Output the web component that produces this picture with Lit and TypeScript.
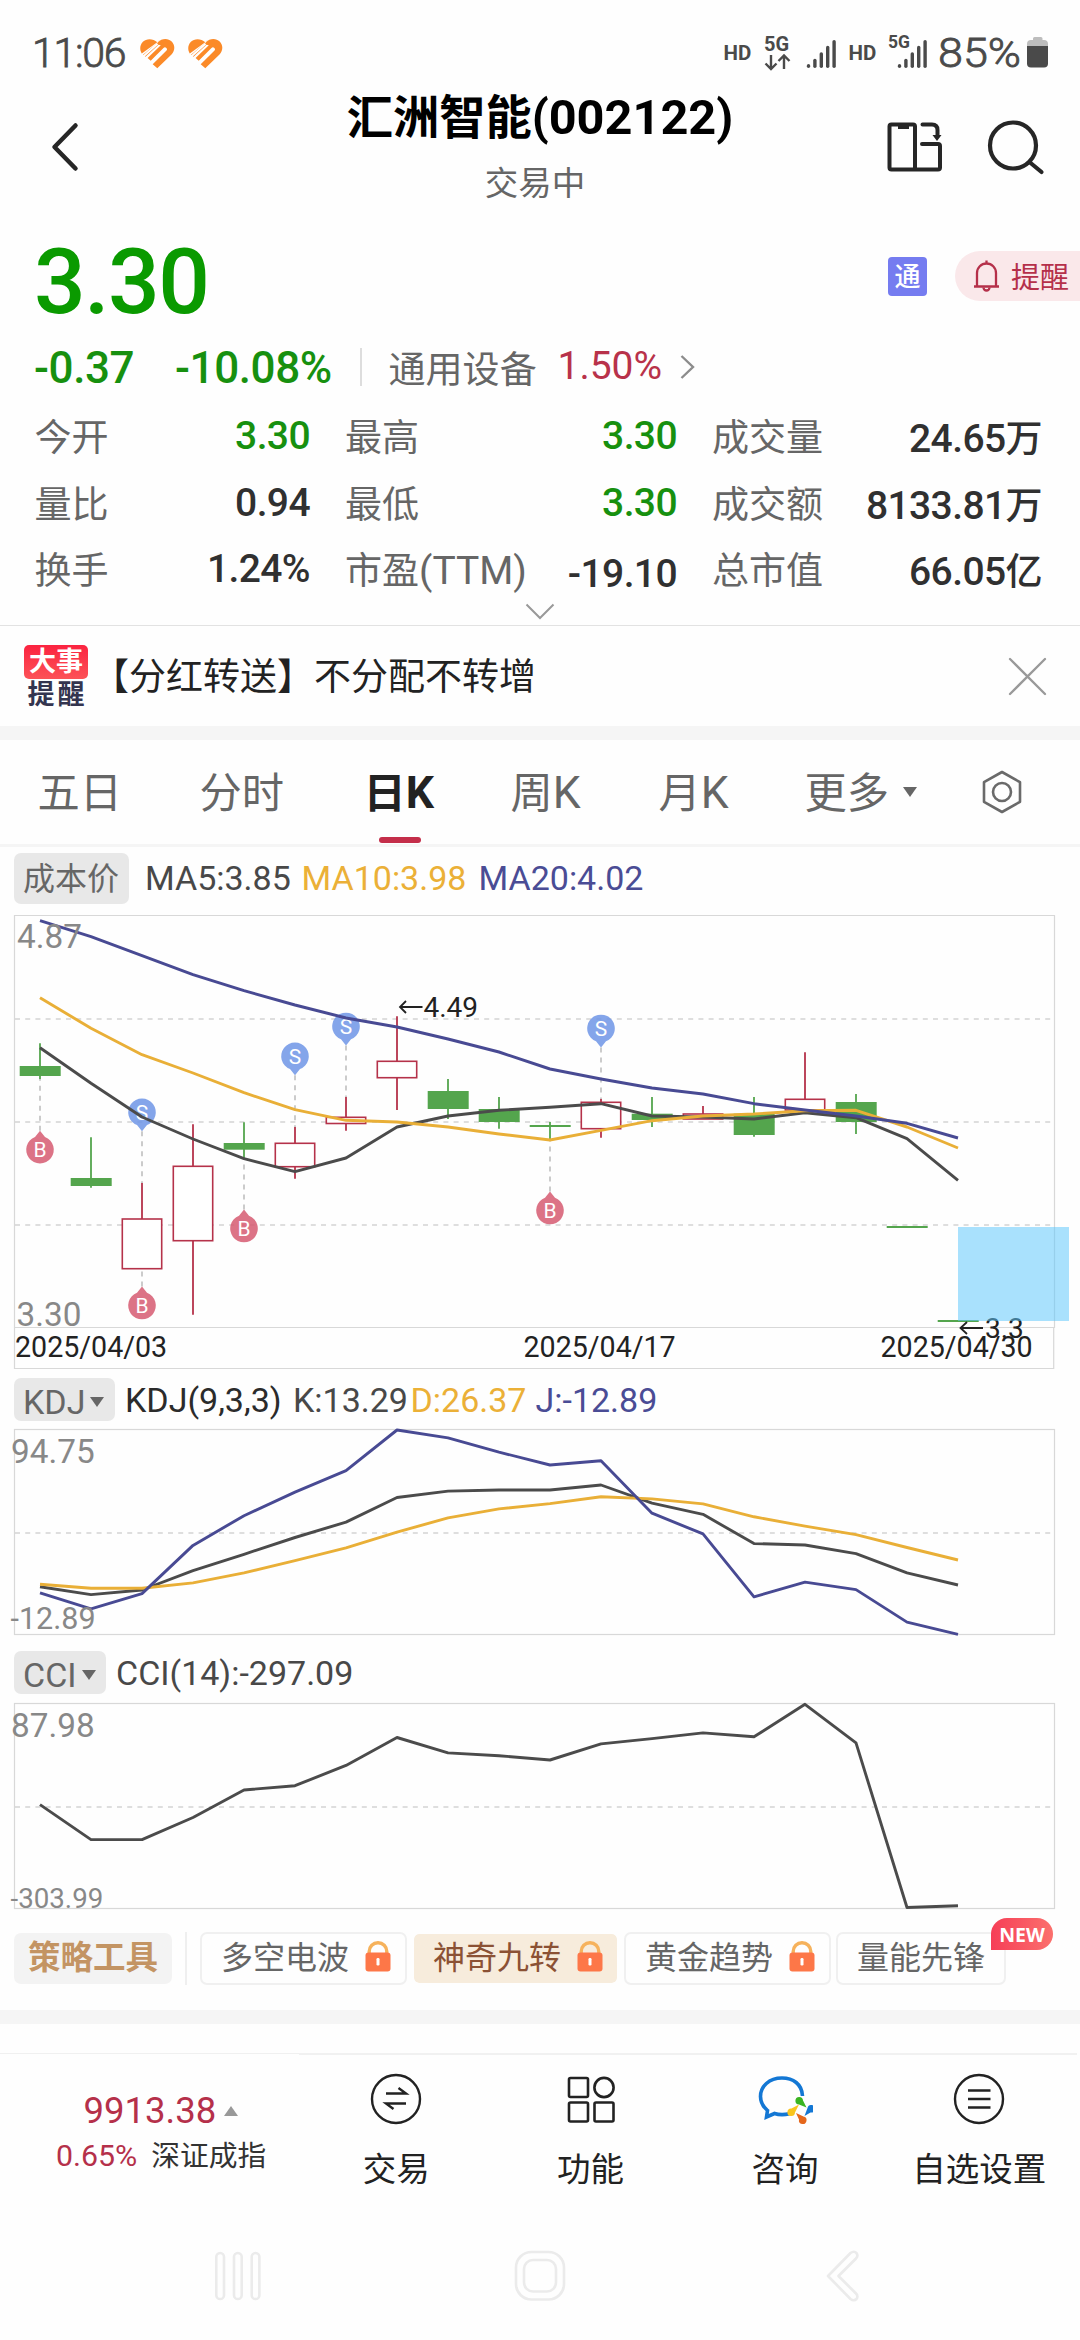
import { LitElement, html, svg, css } from "lit";
import { customElement } from "lit/decorators.js";
import { classMap } from "lit/directives/class-map.js";

const FIRST_X = 40;
const STEP = 51;
const xAt = (i: number) => FIRST_X + STEP * i;
const pathOf = (ys: number[]) => ys.map((y, i) => `${xAt(i)},${y.toFixed(1)}`).join(" ");
const scaled = (base: number, unit: number, vs: number[]) => vs.map((v) => base + v / unit);

interface Candle { up: boolean; high: number; low: number; top: number; bottom: number; }
const c = (up: boolean, high: number, low: number, top: number, bottom: number): Candle => ({ up, high, low, top, bottom });

const CANDLES: Candle[] = [
  c(false, 1043.3, 1079, 1066, 1076),
  c(false, 1137.3, 1187.7, 1178, 1186),
  c(true, 1183, 1219, 1219, 1268.7),
  c(true, 1124.3, 1314.7, 1166.3, 1240.7),
  c(false, 1122.3, 1158, 1143, 1149.7),
  c(true, 1127, 1178.7, 1143.3, 1166.7),
  c(true, 1097, 1130.7, 1117.3, 1123.5),
  c(true, 1016.3, 1110, 1061.3, 1077.7),
  c(false, 1079, 1119, 1091, 1109),
  c(false, 1097, 1128.7, 1109, 1122),
  c(false, 1122, 1140, 1125, 1127),
  c(true, 1099, 1137.7, 1102.3, 1128.7),
  c(false, 1097, 1127, 1113.7, 1120),
  c(true, 1106, 1119, 1114, 1119),
  c(false, 1097, 1136.7, 1113.7, 1135),
  c(true, 1052.3, 1099.3, 1099.3, 1110),
  c(false, 1094, 1134, 1102, 1122),
  c(false, 1226, 1228, 1226, 1228),
  c(false, 1320, 1322, 1320, 1322),
];

const MA5 = scaled(900, 3, [443, 550, 651, 717, 776, 815, 774, 681, 648, 631, 622, 611, 648, 651, 657, 638, 653, 716, 841]);
const MA10 = scaled(900, 3, [293, 385, 464, 519, 578, 629, 661, 666, 681, 702, 720, 691, 662, 648, 642, 632, 631, 681, 744]);
const MA20 = scaled(900, 3, [62, 110, 167, 224, 272, 315, 354, 381, 417, 456, 507, 537, 564, 582, 611, 630, 648, 670, 714]);
const K = scaled(1370, 2.8, [607, 629, 616, 562, 516, 469, 426, 357, 339, 336, 336, 322, 373, 404, 486, 490, 514, 568, 602]);
const D = scaled(1370, 2.8, [600, 611, 611, 596, 568, 534, 498, 454, 414, 389, 374, 355, 361, 375, 411, 437, 461, 497, 532]);
const J = scaled(1370, 2.8, [624, 669, 626, 491, 408, 342, 282, 168, 190, 230, 266, 254, 401, 459, 635, 594, 615, 706, 740]);
const CCI = scaled(1370, 2.8, [1217, 1315, 1315, 1253, 1176, 1164, 1107, 1029, 1072, 1080, 1092, 1047, 1032, 1016, 1027, 936, 1044, 1505, 1500]);

interface Marker { i: number; kind: "B" | "S"; cy: number; to: number; }
const MARKERS: Marker[] = [
  { i: 0, kind: "B", cy: 1149.7, to: 1079 },
  { i: 2, kind: "S", cy: 1112.3, to: 1183 },
  { i: 2, kind: "B", cy: 1305.5, to: 1270 },
  { i: 4, kind: "B", cy: 1228.5, to: 1158 },
  { i: 5, kind: "S", cy: 1056.3, to: 1127 },
  { i: 6, kind: "S", cy: 1026.5, to: 1097 },
  { i: 10, kind: "B", cy: 1210.5, to: 1140 },
  { i: 11, kind: "S", cy: 1028.5, to: 1099 },
];

interface Stat { label: string; latin?: string; value: string; unit?: string; down?: boolean; drop?: boolean; }
const STATS: Stat[] = [
  { label: "今开", value: "3.30", down: true },
  { label: "最高", value: "3.30", down: true },
  { label: "成交量", value: "24.65", unit: "万" },
  { label: "量比", value: "0.94" },
  { label: "最低", value: "3.30", down: true },
  { label: "成交额", value: "8133.81", unit: "万" },
  { label: "换手", value: "1.24%" },
  { label: "市盈", latin: "(TTM)", value: "-19.10", drop: true },
  { label: "总市值", value: "66.05", unit: "亿" },
];

@customElement("stock-chart")
class StockChart extends LitElement {
  static styles = css`
    :host { display: block; }
    svg { display: block; overflow: visible; }
    text { font-family: Roboto, sans-serif; }
    .frame { fill: none; stroke: #d8d8d8; stroke-width: 1.2; }
    .grid { stroke: #d4d4d4; stroke-width: 1.6; stroke-dasharray: 5 5.2; }
    .line { fill: none; stroke-width: 2.9; stroke-linejoin: round; }
    .dark { stroke: #4b4b4b; }
    .gold { stroke: #e9af37; }
    .navy { stroke: #484a93; }
    .axis { fill: #888; font-size: 33.3px; }
    .axis-small { font-size: 30.5px; }
    .axis-tiny { font-size: 27.7px; }
    .note { fill: #222; font-size: 28px; }
    .date { fill: #222; font-size: 28.6px; }
    .arrow { fill: none; stroke: #222; stroke-width: 1.8; }
    .up { fill: #fff; stroke: #b5324a; stroke-width: 1.6; }
    .up-wick { stroke: #b5324a; stroke-width: 1.8; }
    .down { fill: #54a54d; }
    .down-wick { stroke: #54a54d; stroke-width: 1.8; }
    .leader { stroke: #c6c6c6; stroke-width: 1.8; stroke-dasharray: 5 5; }
    .sell { fill: #6f95e6; fill-opacity: .85; }
    .buy { fill: #d65b71; fill-opacity: .85; }
    .mark { fill: #fff; font-size: 21px; text-anchor: middle; }
    .zone { fill: #5cc7fb; fill-opacity: .53; }
  `;

  private candle(k: Candle, i: number) {
    const x = xAt(i);
    return svg`
      <line class=${k.up ? "up-wick" : "down-wick"} x1=${x} x2=${x} y1=${k.high} y2=${k.low}></line>
      ${k.up
        ? svg`<rect class="up" x=${x - 19.7} y=${k.top} width="39.4" height=${k.bottom - k.top}></rect>`
        : svg`<rect class="down" x=${x - 20.3} y=${k.top} width="41" height=${k.bottom - k.top}></rect>`}`;
  }

  private marker(m: Marker) {
    const x = xAt(m.i);
    const dir = m.kind === "S" ? 1 : -1;
    return svg`
      <line class="leader" x1=${x} x2=${x} y1=${m.cy + dir * 19} y2=${m.to}></line>
      <path class=${m.kind === "S" ? "sell" : "buy"}
        d="M${x - 5} ${m.cy + dir * 12.8} A13.8 13.8 0 1 ${dir > 0 ? 1 : 0} ${x + 5} ${m.cy + dir * 12.8} L${x} ${m.cy + dir * 19} Z"></path>
      <text class="mark" x=${x} y=${m.cy + 7.2}>${m.kind}</text>`;
  }

  render() {
    return html`<svg width="1080" height="470" viewBox="0 905 1080 470">
      <path class="frame" d="M14.5 915.5H1054.5V1327.5H14.5ZM14.5 1327.5V1368.5H1053.7V1327.5"></path>
      ${[1019, 1122, 1225].map((y) => svg`<line class="grid" x1="15" x2="1054" y1=${y} y2=${y}></line>`)}
      ${CANDLES.map((k, i) => this.candle(k, i))}
      ${MARKERS.map((m) => this.marker(m))}
      <polyline class="line dark" points=${pathOf(MA5)}></polyline>
      <polyline class="line gold" points=${pathOf(MA10)}></polyline>
      <polyline class="line navy" points=${pathOf(MA20)}></polyline>
      <path class="arrow" d="M422.5 1007H400M406 1001L400 1007L406 1013"></path>
      <text class="note" x="423.5" y="1016.7">4.49</text>
      <path class="arrow" d="M983 1328H960.5M967 1322L960.5 1328L967 1334"></path>
      <text class="note" x="985" y="1338">3.3</text>
      <rect class="zone" x="958" y="1227" width="111" height="94"></rect>
      <text class="axis" x="17" y="948">4.87</text>
      <text class="axis" x="16.5" y="1326">3.30</text>
      <text class="date" x="15" y="1356.7">2025/04/03</text>
      <text class="date" x="523.5" y="1356.7">2025/04/17</text>
      <text class="date" x="880.5" y="1356.7">2025/04/30</text>
    </svg>`;
  }
}

@customElement("kdj-chart")
class KdjChart extends LitElement {
  static styles = StockChart.styles;
  render() {
    return html`<svg width="1080" height="220" viewBox="0 1425 1080 220">
      <rect class="frame" x="14.5" y="1429.5" width="1040" height="205"></rect>
      <line class="grid" x1="15" x2="1054" y1="1533" y2="1533"></line>
      <polyline class="line dark" points=${pathOf(K)}></polyline>
      <polyline class="line gold" points=${pathOf(D)}></polyline>
      <polyline class="line navy" points=${pathOf(J)}></polyline>
      <text class="axis" x="11" y="1463">94.75</text>
      <text class="axis axis-small" x="10.5" y="1628.5">-12.89</text>
    </svg>`;
  }
}

@customElement("cci-chart")
class CciChart extends LitElement {
  static styles = StockChart.styles;
  render() {
    return html`<svg width="1080" height="212" viewBox="0 1701 1080 212">
      <rect class="frame" x="14.5" y="1703.5" width="1040" height="205"></rect>
      <line class="grid" x1="15" x2="1054" y1="1807" y2="1807"></line>
      <polyline class="line dark" points=${pathOf(CCI)}></polyline>
      <text class="axis" x="11" y="1736.8">87.98</text>
      <text class="axis axis-tiny" x="10.5" y="1908.3">-303.99</text>
    </svg>`;
  }
}

const heart = html`<svg class="heart" width="35" height="31" viewBox="0 0 35 31">
  <path fill="#fb8a28" d="M17.3 4.2C13 .2 6.300 .2 2.900 3.800C-.6 7.600 -.3 12 1.800 15.600L20 2.200C19 2.600 18 3.400 17.300 4.200Z"></path>
  <path fill="#fb8a28" d="M3 16.800L17.800 4.400C21.500 .2 28 -.2 31.700 3.500C35.400 7.200 35 13 31.500 16.600L17.300 30.300L12.700 26.200L26.300 12.800A2 2 0 0 0 23.500 9.900L10.700 22.700L7.600 20L20.800 7.200L18.500 6.800L5.500 18.700Z"></path>
  <path stroke="#fff" stroke-width="2" d="M3.200 18.500L17.500 5.800"></path>
</svg>`;

const lock = html`<svg class="lock" width="26" height="31" viewBox="0 0 26 31">
  <path fill="none" stroke="#f6b25c" stroke-width="3.400" d="M4.200 14V10.500A8.800 8.800 0 0 1 21.800 10.500V14"></path>
  <rect fill="#fd7748" x=".5" y="11.500" width="25" height="19" rx="3"></rect>
  <rect fill="#fff" x="11.500" y="17" width="3" height="7.500" rx="1.200"></rect>
</svg>`;

const signal = (x: number) => svg`
  <g stroke="#4a4a4a" stroke-width="3.400" stroke-linecap="round">
    ${[0, 1, 2, 3, 4].map((i) => svg`<path d=${`M${x + i * 6.4} 66.200V${[65.8, 60.5, 54, 47.5, 41.8][i]}`}></path>`)}
  </g>`;

@customElement("app-root")
class AppRoot extends LitElement {
  static styles = css`
    :host { display: block; width: 1080px; height: 2340px; overflow: hidden; background: #fefefe;
      font-family: Roboto, "Noto Sans CJK SC", sans-serif; color: #222; }
    svg { display: block; flex: none; }
    .cjk { font-size: .95em; }
    .status { height: 76px; display: flex; align-items: flex-start; color: #4a4a4a; }
    .clock { margin: 32px 0 0 32px; width: 108px; font-size: 41px; line-height: 42px; letter-spacing: -1.3px; font-weight: 300; -webkit-text-stroke: .8px #4a4a4a; white-space: nowrap; }
    .heart { margin: 38px 12.500px 0 0; }
    .radio { margin-left: auto; }
    .radio text { font-family: Roboto, sans-serif; fill: #4a4a4a; }

    .header { height: 156px; display: grid; grid-template-columns: 200px 1fr 200px; }
    .back { margin: 44px 0 0 50px; }
    .titles { text-align: center; }
    .title { font-size: 48.700px; line-height: 56px; margin-top: 14px; font-weight: 700; color: #000; }
    .state { font-size: 33.500px; line-height: 40px; margin-top: 18px; padding-right: 10px; color: #666; }
    .actions { display: flex; padding-top: 44px; gap: 45px; }

    .price-row { height: 99.500px; padding-left: 34px; display: flex; align-items: center; }
    .price { font-size: 91px; line-height: 99px; letter-spacing: -1.500px; font-weight: 500; color: #0a9a00; flex: 1; padding-top: 1px; }
    .link-badge { width: 39px; height: 39px; margin-right: 28px; margin-top: -11px; border-radius: 4px; background: #757cf0; color: #fff; font-size: 26px; line-height: 41px; text-align: center; font-weight: 500; }
    .remind { width: 125px; height: 50px; margin-top: -11px; box-sizing: border-box; padding-left: 18px; display: flex; align-items: center; gap: 11px; border-radius: 25px 0 0 25px; background: #fae8ea; color: #b5304a; font-size: 29px; line-height: 50px; white-space: nowrap; }
    .remind span { padding-top: 3px; }
    .change-row { height: 71.500px; padding-left: 34px; display: flex; align-items: center; font-size: 39px; }
    .delta { font-size: 44px; font-weight: 500; letter-spacing: -.4px; color: #17900f; width: 141px; padding-top: 2px; }
    .percent { width: 185px; }
    .rule { width: 1.500px; height: 38px; background: #ddd; margin-right: 27px; }
    .sector { color: #666; width: 169px; }
    .rise { color: #b8324a; width: 122px; margin-top: -3px; }

    .stats { display: grid; grid-template-columns: 275.500px 332px 330px; grid-auto-rows: 66.500px; column-gap: 35px; padding-left: 34.500px; }
    .stat { display: flex; justify-content: space-between; align-items: center; font-size: 39px; white-space: nowrap; }
    .label { color: #666; margin-top: -2px; }
    .value { font-weight: 500; color: #303030; letter-spacing: -.6px; }
    .value.down { color: #17900f; }
    .value.drop { padding-top: 9px; }
    .expand { height: 22px; display: flex; justify-content: center; }

    .notice { height: 101px; box-sizing: border-box; border-top: 1.500px solid #e2e2e2; display: flex; align-items: flex-start; }
    .event { margin: 19px 4px 0 24px; width: 64px; text-align: center; font-weight: 700; }
    .event-top { height: 34px; border-radius: 5px; color: #fff; background: linear-gradient(#fb2340, #fc5257); font-size: 27px; line-height: 35px; }
    .event-bottom { color: #34354f; font-size: 27px; line-height: 33px; letter-spacing: 3px; padding-left: 3px; }
    .message { font-size: 37px; line-height: 52px; margin-top: 26.500px; flex: 1; }
    .close { margin: 31px 33px 0 0; }
    .band { height: 14px; background: #f5f5f5; }

    .tabs { height: 104px; border-bottom: 3px solid #f5f5f5; display: flex; align-items: center; font-size: 44.500px; color: #666; position: relative; }
    .tab { white-space: nowrap; line-height: 60px; padding-top: 4px; }
    .t1 { margin-left: 37.500px; width: 162px; }
    .t2 { width: 164px; }
    .t3 { width: 147px; color: #222; font-weight: 700; }
    .t4 { width: 148px; }
    .t5 { width: 146px; }
    .t6 { width: 98px; }
    .caret { width: 0; height: 0; border: 7.500px solid transparent; border-top: 10px solid #666; border-bottom: 0; }
    .gear { margin-left: 65px; }
    .underline { position: absolute; left: 379px; top: 97px; width: 42px; height: 6px; border-radius: 3px; background: #c42e4a; }

    .legend { display: flex; align-items: center; font-size: 34px; white-space: nowrap; color: #484848; }
    .pick { margin-left: 14px; border-radius: 7px; background: #e8e8e8; color: #666; box-sizing: border-box; padding-left: 9px; display: flex; align-items: center; }
    .gold { color: #ebb037; }
    .navy { color: #4a4c95; }
    .ink { color: #2b2b2b; }
    .ma { height: 58px; box-sizing: border-box; padding-top: 5px; line-height: 50px; }
    .ma .pick { width: 115px; height: 51px; font-size: 32px; margin-right: 16px; padding-top: 1px; }
    .ma5 { width: 156.500px; }
    .ma10 { width: 177px; }
    .kdj { height: 50px; }
    .kdj .pick { width: 101px; height: 43px; margin-right: 10px; font-size: 34px; gap: 4.500px; padding-top: 5px; }
    .kdj-name { width: 168px; }
    .kdj-k { width: 117.500px; }
    .kdj-d { width: 125px; }
    .cci { height: 56px; }
    .cci .pick { width: 92px; height: 43px; margin-right: 10px; font-size: 34px; gap: 5px; padding-top: 5px; }

    .tools { height: 97px; box-sizing: border-box; padding: 19px 0 0 14px; display: flex; align-items: flex-start; font-size: 32px; white-space: nowrap; }
    .brand { margin-top: 1px; width: 158px; height: 51px; line-height: 51px; border-radius: 7px; background: #f3f3f3; color: #c39463; font-size: 32.500px; font-weight: 700; text-align: center; }
    .sep { width: 2px; height: 53px; background: #efefef; margin: 0 13px; }
    .chip { height: 53px; box-sizing: border-box; width: 207px; margin-right: 5px; border: 2px solid #f0f0f0; border-radius: 7px; padding-left: 19px; display: flex; align-items: center; color: #666; position: relative; line-height: 49px; }
    .chip.on { background: #f7ecdc; border-color: #fefefe; background-clip: padding-box; color: #8b5134; }
    .chip.last { width: 170px; }
    .lock { margin-left: 16px; margin-top: -3px; }
    .new { position: absolute; left: 153px; top: -16px; width: 62px; height: 32px; border-radius: 16px 16px 16px 0; background: linear-gradient(90deg, #f63e57, #fb706d); color: #fff; font: 700 19.500px/33px "Noto Sans", sans-serif; text-align: center; }

    .gap { height: 29px; }
    .nav { height: 167px; display: grid; grid-template-columns: 299px repeat(4, 194.400px); }
    .index { border-top: 1px solid #f0f0f0; padding-top: 35px; }
    .index-value { display: flex; align-items: center; padding-left: 83.500px; font-size: 36.500px; line-height: 44px; color: #b5304a; gap: 8px; }
    .index-line { display: flex; padding-left: 56px; font-size: 30.300px; line-height: 42px; margin-top: 2px; gap: 14px; color: #333; white-space: nowrap; }
    .index-rise { color: #b5304a; }
    .caret.flip { border-top: 0; border-bottom: 10px solid #999; }
    .item { border-top: 2px solid #f1f1f1; display: flex; flex-direction: column; align-items: center; }
    .item svg { margin-top: 18px; }
    .item-label { font-size: 33.500px; line-height: 44px; margin-top: 23px; white-space: nowrap; }
    .system { height: 120px; }
  `;

  render() {
    return html`
      <div class="status">
        <div class="clock">11:06</div>
        ${heart}${heart}
        <svg class="radio" width="380" height="76" viewBox="700 0 380 76">
          <text x="723.500" y="59.500" font-size="20.500" font-weight="700">HD</text>
          <text x="764" y="50.500" font-size="20" font-weight="700">5G</text>
          <path fill="none" stroke="#4a4a4a" stroke-width="2.400" d="M771 55V69M765.500 63.500L771 69L776.500 63.500M784 69V55.500M778.500 61L784 55.500L789.500 61"></path>
          ${signal(808.500)}
          <text x="848.500" y="59.500" font-size="20.500" font-weight="700">HD</text>
          <text x="888" y="48" font-size="17.500" font-weight="700">5G</text>
          ${signal(899.500)}
          <text x="938" y="66.500" font-size="40" font-weight="300" stroke="#4a4a4a" stroke-width=".8" textLength="83" lengthAdjust="spacingAndGlyphs">85%</text>
          <path fill="#bdbdbd" d="M1033 40V38.500Q1033 37 1034.500 37H1041Q1042.500 37 1042.500 38.500V40H1044Q1048 40 1048 44V48H1027V44Q1027 40 1031 40Z"></path>
          <path fill="#4a4a4a" d="M1027 46H1048V63.500Q1048 67.500 1044 67.500H1031Q1027 67.500 1027 63.500Z"></path>
        </svg>
      </div>

      <div class="header">
        <svg class="back" width="30" height="54" viewBox="50 120 30 54"><path fill="none" stroke="#262626" stroke-width="4.500" stroke-linecap="round" stroke-linejoin="round" d="M75.500 125.500L54.500 147L75.500 168.500"></path></svg>
        <div class="titles">
          <div class="title"><span class="cjk">汇洲智能</span>(002122)</div>
          <div class="state">交易中</div>
        </div>
        <div class="actions">
          <svg width="62" height="56" viewBox="880 120 62 56" style="overflow:visible">
            <g fill="none" stroke="#262626" stroke-width="4" stroke-linecap="round" stroke-linejoin="round">
              <path d="M891.500 124.500H913Q915 124.500 915 126.500V169.500H891.500Q889.500 169.500 889.500 167.500V126.500Q889.500 124.500 891.500 124.500ZM915 169.500H938Q940 169.500 940 167.500V146Q940 144 938 144H922"></path>
              <path d="M922.500 124.500H932Q937.500 124.500 937.500 130V136"></path>
            </g>
            <path fill="#262626" d="M898 125H909V129H898ZM932.500 135H941.500L937 141Z"></path>
          </svg>
          <svg width="60" height="56" viewBox="987 120 60 56"><g fill="none" stroke="#262626" stroke-width="4.200" stroke-linecap="round"><circle cx="1013" cy="145.500" r="23"></circle><path d="M1030 162.500L1041.500 172"></path></g></svg>
        </div>
      </div>

      <div class="price-row">
        <div class="price">3.30</div>
        <div class="link-badge">通</div>
        <div class="remind">
          <svg width="27" height="34" viewBox="0 0 27 34"><g fill="none" stroke="#b5304a" stroke-width="2.300"><path d="M13.500 1.500V4.500M4 27V14A9.500 9.500 0 0 1 23 14V27M1 27.500H26"></path><path d="M10.500 28.500A3 3 0 0 0 16.500 28.500"></path></g></svg>
          <span>提醒</span>
        </div>
      </div>
      <div class="change-row">
        <div class="delta">-0.37</div>
        <div class="delta percent">-10.08%</div>
        <div class="rule"></div>
        <div class="sector"><span class="cjk">通用设备</span></div>
        <div class="rise">1.50%</div>
        <svg width="16" height="26" viewBox="0 0 16 26"><path fill="none" stroke="#8c8c8c" stroke-width="2.400" d="M1.500 2L13 13L1.500 24"></path></svg>
      </div>

      <div class="stats">
        ${STATS.map((s) => html`<div class="stat">
          <span class="label"><span class="cjk">${s.label}</span>${s.latin ?? ""}</span>
          <span class=${classMap({ value: true, down: !!s.down, drop: !!s.drop })}>${s.value}${s.unit ? html`<span class="cjk">${s.unit}</span>` : ""}</span>
        </div>`)}
      </div>
      <div class="expand"><svg width="30" height="18" viewBox="0 0 30 18"><path fill="none" stroke="#999" stroke-width="2" d="M1.500 1.500L15 15L28.500 1.500"></path></svg></div>

      <div class="notice">
        <div class="event"><div class="event-top">大事</div><div class="event-bottom">提醒</div></div>
        <div class="message">【分红转送】不分配不转增</div>
        <svg class="close" width="39" height="39" viewBox="0 0 39 39"><path stroke="#999" stroke-width="2.300" stroke-linecap="round" d="M2 2L37 37M37 2L2 37"></path></svg>
      </div>
      <div class="band"></div>

      <div class="tabs">
        <div class="tab t1"><span class="cjk">五日</span></div>
        <div class="tab t2"><span class="cjk">分时</span></div>
        <div class="tab t3"><span class="cjk">日</span>K</div>
        <div class="tab t4"><span class="cjk">周</span>K</div>
        <div class="tab t5"><span class="cjk">月</span>K</div>
        <div class="tab t6"><span class="cjk">更多</span></div>
        <div class="caret"></div>
        <svg class="gear" width="40" height="44" viewBox="0 0 40 44"><g fill="none" stroke="#6a6a6a" stroke-width="2.600" stroke-linejoin="round"><path d="M20 2L38 12.200V31.800L20 42L2 31.800V12.200Z"></path><circle cx="20" cy="22" r="9"></circle></g></svg>
        <div class="underline"></div>
      </div>

      <div class="legend ma">
        <div class="pick">成本价</div>
        <div class="ma5">MA5:3.85</div>
        <div class="ma10 gold">MA10:3.98</div>
        <div class="navy">MA20:4.02</div>
      </div>
      <stock-chart></stock-chart>

      <div class="legend kdj">
        <div class="pick">KDJ<span class="caret"></span></div>
        <div class="kdj-name ink">KDJ(9,3,3)</div>
        <div class="kdj-k">K:13.29</div>
        <div class="kdj-d gold">D:26.37</div>
        <div class="navy">J:-12.89</div>
      </div>
      <kdj-chart></kdj-chart>

      <div class="legend cci">
        <div class="pick">CCI<span class="caret"></span></div>
        <div>CCI(14):-297.09</div>
      </div>
      <cci-chart></cci-chart>

      <div class="tools">
        <div class="brand">策略工具</div>
        <div class="sep"></div>
        <div class="chip">多空电波${lock}</div>
        <div class="chip on">神奇九转${lock}</div>
        <div class="chip">黄金趋势${lock}</div>
        <div class="chip last">量能先锋<span class="new">NEW</span></div>
      </div>
      <div class="band"></div>
      <div class="gap"></div>

      <div class="nav">
        <div class="index">
          <div class="index-value">9913.38<span class="caret flip"></span></div>
          <div class="index-line"><span class="index-rise">0.65%</span><span class="cjk">深证成指</span></div>
        </div>
        <div class="item">
          <svg width="56" height="52" viewBox="0 0 56 52"><g fill="none" stroke="#222" stroke-width="2.400"><circle cx="28" cy="26" r="24"></circle><path d="M18 20.500H38L30.500 15M38 30.500H18L25.500 36"></path></g></svg>
          <div class="item-label">交易</div>
        </div>
        <div class="item">
          <svg width="56" height="52" viewBox="0 0 56 52"><g fill="none" stroke="#222" stroke-width="2.600"><rect x="6" y="5" width="19" height="19" rx="1.500"></rect><circle cx="41" cy="14.500" r="9.600"></circle><rect x="6" y="29.500" width="19" height="19" rx="1.500"></rect><rect x="31.500" y="29.500" width="19" height="19" rx="1.500"></rect></g></svg>
          <div class="item-label">功能</div>
        </div>
        <div class="item">
          <svg width="56" height="52" viewBox="0 0 56 52">
            <path fill="none" stroke="#1377d4" stroke-width="3.600" d="M45.500 23C45 11 36 5 25 5C12 5 3.500 13.500 3.500 23.500C3.500 30 7 34.500 10.500 37.500L9.500 44L17.500 40.500C22 42 28 41.800 32.500 40.800"></path>
            <path fill="#3ab521" d="M49.500 34.500L42 31.500A3.800 3.800 0 1 1 46 27.500Z"></path>
            <path fill="#f9c51d" d="M42 31.500L38 39.500A3.800 3.800 0 1 1 34.500 35.500Z"></path>
            <path fill="#e5671c" d="M39 40L46.500 43.500A3.800 3.800 0 1 1 42 46.500Z"></path>
            <path fill="#1377d4" d="M47.500 43L50.500 35A3.800 3.800 0 1 1 53.500 39.500Z"></path>
          </svg>
          <div class="item-label">咨询</div>
        </div>
        <div class="item">
          <svg width="56" height="52" viewBox="0 0 56 52"><g fill="none" stroke="#222" stroke-width="2.400"><circle cx="28" cy="26" r="24"></circle><path d="M17 17.500H39.500M17 26H39.500M17 34.500H39.500"></path></g></svg>
          <div class="item-label">自选设置</div>
        </div>
      </div>

      <svg class="system" width="1080" height="120" viewBox="0 2220 1080 120">
        <g fill="none" stroke="#ebebeb" stroke-width="2.600">
          <rect x="216.300" y="2253" width="7.700" height="46" rx="3.850"></rect>
          <rect x="234" y="2253" width="7.700" height="46" rx="3.850"></rect>
          <rect x="251.700" y="2253" width="7.700" height="46" rx="3.850"></rect>
          <rect x="516" y="2252" width="48" height="47.500" rx="15.500"></rect>
          <rect x="524" y="2260" width="32" height="31.500" rx="9"></rect>
          <path stroke-linejoin="round" d="M828 2276L850.500 2253Q854 2250.500 856.500 2253Q858.500 2256 856 2258.500L838.500 2276L856 2293.500Q858.500 2296 856.500 2299Q854 2301.500 850.500 2299Z"></path>
        </g>
      </svg>
    `;
  }
}
